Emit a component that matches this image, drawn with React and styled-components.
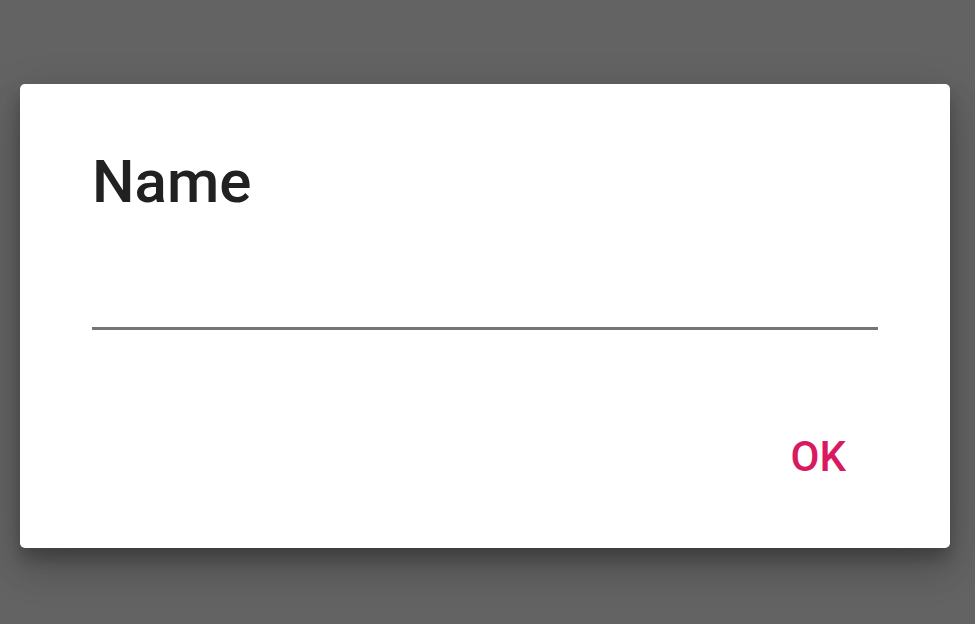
import React from 'react'
import styled, { createGlobalStyle } from 'styled-components'

const GlobalStyle = createGlobalStyle`
  html, body {
    margin: 0;
    padding: 0;
    height: 100%;
    background: #636363;
  }
  body {
    font-family: Roboto, "Noto Sans", sans-serif;
  }
`

const Backdrop = styled.div`
  width: 975px;
  height: 624px;
  padding: 84px 25px 0 20px;
  box-sizing: border-box;
  background: #636363;
`

const Dialog = styled.div`
  width: 930px;
  height: 464px;
  box-sizing: border-box;
  background: #fff;
  border-radius: 5px;
  padding: 62px 72px 0 72px;
  display: flex;
  flex-direction: column;
  box-shadow: 0 24px 38px rgba(0, 0, 0, 0.14), 0 9px 46px rgba(0, 0, 0, 0.12),
    0 11px 15px rgba(0, 0, 0, 0.2);
`

const Title = styled.h2`
  margin: 0;
  font-size: 60px;
  line-height: 71px;
  font-weight: 500;
  color: #212121;
`

const Field = styled.input`
  display: block;
  margin-top: 50px;
  height: 63px;
  width: 100%;
  box-sizing: border-box;
  border: none;
  border-bottom: 3px solid #757575;
  outline: none;
  background: transparent;
  font-family: inherit;
  font-size: 40px;
  color: #212121;
  padding: 0;
`

const Actions = styled.div`
  display: flex;
  justify-content: flex-end;
  margin-top: 102px;
  margin-right: 16px;
`

const Button = styled.button`
  border: none;
  background: transparent;
  padding: 0 16px;
  font-family: inherit;
  font-size: 42px;
  line-height: 50px;
  font-weight: 500;
  color: #d81b60;
  text-transform: uppercase;
  cursor: pointer;
`

export default function App() {
  return (
    <>
      <GlobalStyle />
      <Backdrop>
        <Dialog role="dialog" aria-label="Name">
          <Title>Name</Title>
          <Field type="text" />
          <Actions>
            <Button type="button">OK</Button>
          </Actions>
        </Dialog>
      </Backdrop>
    </>
  )
}
